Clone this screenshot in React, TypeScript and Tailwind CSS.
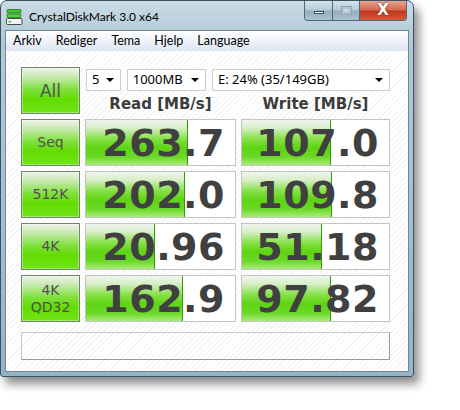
import React from 'react'

type Row = {
  label: string[]
  read: string
  readBar: number
  write: string
  writeBar: number
}

const rows: Row[] = [
  { label: ['Seq'], read: '263.7', readBar: 102, write: '107.0', writeBar: 89 },
  { label: ['512K'], read: '202.0', readBar: 99, write: '109.8', writeBar: 90 },
  { label: ['4K'], read: '20.96', readBar: 69, write: '51.18', writeBar: 80 },
  { label: ['4K', 'QD32'], read: '162.9', readBar: 97, write: '97.82', writeBar: 89 },
]

const menus = ['Arkiv', 'Rediger', 'Tema', 'Hjelp', 'Language']

function AppIcon() {
  return (
    <svg width="17" height="16" viewBox="0 0 17 16">
      <rect x="1" y="0.5" width="14" height="3.5" rx="1" fill="#3fc22a" stroke="#1f7a16" strokeWidth="0.8" />
      <rect x="1" y="5" width="14" height="3.5" rx="1" fill="#56d13a" stroke="#1f7a16" strokeWidth="0.8" />
      <rect x="0.5" y="9.5" width="15.5" height="6" rx="1" fill="#f2f2f2" stroke="#4a4a4a" strokeWidth="1" />
      <rect x="2.5" y="12" width="2.5" height="1.5" fill="#3fc22a" />
    </svg>
  )
}

function GreenButton({ lines, big }: { lines: string[]; big?: boolean }) {
  return (
    <div className="flex h-[47px] w-[59px] flex-col items-center justify-center border border-[#6f846f] bg-[linear-gradient(to_bottom,#eef3ea_0%,#c2e8a8_22%,#7ee03a_48%,#62dc00_70%,#72e418_100%)] text-[#505050] shadow-[inset_0_0_0_1px_rgba(255,255,255,0.35)]">
      {lines.map((l) => (
        <span
          key={l}
          className={big ? 'text-[17px] leading-[18px]' : 'text-[14px] leading-[17px]'}
          style={{ fontFamily: '"DejaVu Sans", sans-serif' }}
        >
          {l}
        </span>
      ))}
    </div>
  )
}

function ValueBox({ value, bar }: { value: string; bar: number }) {
  return (
    <div className="relative flex h-[47px] items-center justify-end border border-[#c4c4c4] bg-white pr-[10px]">
      <div
        className="absolute top-0 bottom-0 left-0 border-r border-[#2f9a0a] bg-[linear-gradient(to_bottom,#f1f4ef_0%,#d6eec6_18%,#86e046_42%,#5fd314_62%,#6ad925_82%,#a9ec78_100%)]"
        style={{ width: bar }}
      />
      <span
        className="relative text-[38px] leading-none font-bold tracking-[0.5px] text-[#404040]"
        style={{ fontFamily: '"DejaVu Sans", sans-serif' }}
      >
        {value}
      </span>
    </div>
  )
}

function Select({ text, w }: { text: string; w: string }) {
  return (
    <div className={`flex h-[22px] items-center justify-between border border-[#cdcdcd] bg-white pr-[6px] pl-[5px] text-[13px] text-black ${w}`}>
      <span>{text}</span>
      <span className="h-0 w-0 border-x-[4px] border-t-[4px] border-x-transparent border-t-black" />
    </div>
  )
}

export default function App() {
  return (
    <div className="h-[410px] w-[460px] overflow-hidden bg-white" style={{ fontFamily: '"Noto Sans", "Open Sans", sans-serif' }}>
      <div className="flex h-[377px] w-[414px] flex-col rounded-t-[7px] rounded-b-[3px] border border-[#3c5260] bg-[linear-gradient(to_bottom,#c9dbe5_0%,#b2cad7_10%,#a2bfcf_60%,#93b3c6_100%)] shadow-[5px_7px_10px_rgba(0,0,0,0.45)]">
        {/* title bar */}
        <div className="flex h-[29px] items-start">
          <div className="flex items-center gap-[6px] pt-[7px] pl-[5px]">
            <AppIcon />
            <span className="text-[12px] text-black" style={{ fontFamily: 'Lato, sans-serif' }}>
              CrystalDiskMark 3.0 x64
            </span>
          </div>
          <div className="mr-[6px] ml-auto flex h-[20px] overflow-hidden rounded-b-[4px] border border-t-0 border-[#52677a]">
            <div className="flex w-[28px] items-center justify-center border-r border-[#52677a] bg-[linear-gradient(to_bottom,#d6e3ea_0%,#b6c9d5_48%,#94aebe_52%,#a9c3d1_100%)]">
              <span className="mt-[3px] h-[3px] w-[10px] border border-[#374b58] bg-white" />
            </div>
            <div className="flex w-[27px] items-center justify-center border-r border-[#52677a] bg-[linear-gradient(to_bottom,#d6e3ea_0%,#b6c9d5_48%,#94aebe_52%,#a9c3d1_100%)]">
              <span className="h-[9px] w-[11px] border border-[#8ea4b2] bg-[#c8d6de] shadow-[inset_0_0_0_2px_#b0c4d0]" />
            </div>
            <div className="flex w-[46px] items-center justify-center bg-[linear-gradient(to_bottom,#e8a593_0%,#d56a50_45%,#c0381e_55%,#d35a3a_100%)]">
              <span className="text-[15px] leading-none font-bold text-white [text-shadow:0_0_2px_#5a1a0a]" style={{ fontFamily: '"DejaVu Sans", sans-serif' }}>
                X
              </span>
            </div>
          </div>
        </div>

        {/* client */}
        <div className="mx-[4px] mb-[4px] flex flex-1 flex-col border border-[#6f8796] bg-white">
          <div
            className="flex h-[20px] items-center gap-[14px] bg-[linear-gradient(to_bottom,#ffffff_0%,#f1f4fa_45%,#dde4f2_100%)] pl-[7px] text-[12.5px] text-black"
            style={{ fontFamily: 'Lato, sans-serif' }}
          >
            {menus.map((m) => (
              <span key={m}>{m}</span>
            ))}
          </div>

          <div className="flex-1 bg-[repeating-linear-gradient(135deg,#ffffff_0px,#ffffff_3px,#f3f3f3_3px,#f3f3f3_4px)] pt-[16px] pl-[15px]">
            <div className="grid grid-cols-[59px_151px_149px] gap-x-[5px] gap-y-[5px]">
              <GreenButton lines={['All']} big />
              <div className="col-span-2 flex flex-col">
                <div className="mt-[2px] flex gap-[6px] pl-[1px]">
                  <Select text="5" w="w-[35px]" />
                  <Select text="1000MB" w="w-[80px]" />
                  <Select text="E: 24% (35/149GB)" w="w-[180px]" />
                </div>
                <div
                  className="mt-[4px] grid grid-cols-[151px_149px] gap-x-[5px] text-center text-[15px] leading-[18px] font-bold text-[#3c3c3c]"
                  style={{ fontFamily: '"DejaVu Sans", sans-serif' }}
                >
                  <span>Read [MB/s]</span>
                  <span>Write [MB/s]</span>
                </div>
              </div>

              {rows.map((r) => (
                <React.Fragment key={r.label.join()}>
                  <GreenButton lines={r.label} />
                  <ValueBox value={r.read} bar={r.readBar} />
                  <ValueBox value={r.write} bar={r.writeBar} />
                </React.Fragment>
              ))}
            </div>

            <div className="mt-[10px] h-[28px] w-[369px] border border-[#9a9a9a] border-t-[#c8c8c8] border-l-[#c8c8c8] bg-transparent" />
          </div>
        </div>
      </div>
    </div>
  )
}
